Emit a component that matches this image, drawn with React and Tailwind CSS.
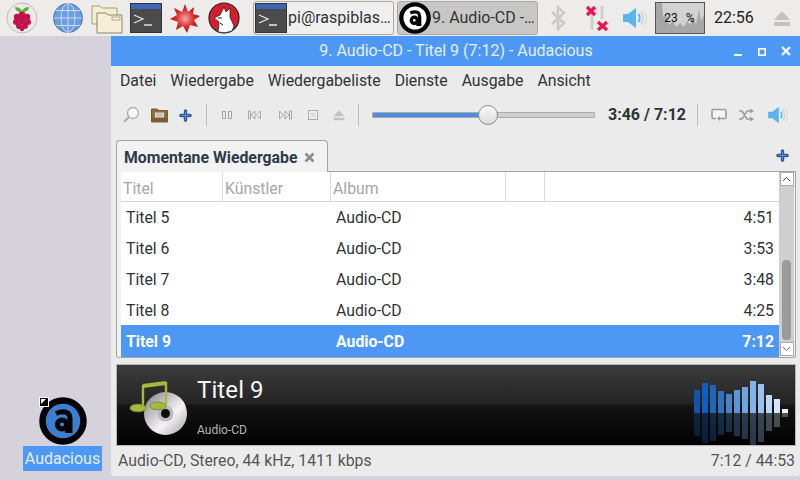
const font = { fontFamily: 'Roboto, sans-serif' };

// Equaliser bars: height above and below the baseline, colour
const bars = [
  { up: 23, color: '#0f55b0' },
  { up: 30, color: '#0f5fc0' },
  { up: 28, color: '#1f66b8' },
  { up: 22, color: '#2f72bd' },
  { up: 19, color: '#4884cc' },
  { up: 23, color: '#5a95d8' },
  { up: 26, color: '#6fa5e2' },
  { up: 32, color: '#84b3ea' },
  { up: 29, color: '#9ac2ee' },
  { up: 18, color: '#bcd8f6' },
  { up: 14, color: '#d5e6f8' },
  { up: 4, color: '#eef4fb' },
];

const rows = [
  { title: 'Titel 5', album: 'Audio-CD', time: '4:51' },
  { title: 'Titel 6', album: 'Audio-CD', time: '3:53' },
  { title: 'Titel 7', album: 'Audio-CD', time: '3:48' },
  { title: 'Titel 8', album: 'Audio-CD', time: '4:25' },
  { title: 'Titel 9', album: 'Audio-CD', time: '7:12', active: true },
];

const menus = ['Datei', 'Wiedergabe', 'Wiedergabeliste', 'Dienste', 'Ausgabe', 'Ansicht'];

const AudaciousIcon = ({ size, fill = '#fff' }) => (
  <svg width={size} height={size} viewBox="0 0 48 48" className="shrink-0">
    <circle cx="24" cy="24" r="20.5" fill={fill} stroke="#000" strokeWidth="6.5" />
    <circle cx="23" cy="27.5" r="4.6" fill="none" stroke="#000" strokeWidth="5" />
    <path d="M17 16.5 Q24 13.5 28.5 16 Q31 17.5 31 22 V33.5 H26" fill="none" stroke="#000" strokeWidth="5" />
  </svg>
);

const TerminalIcon = ({ size = 32 }) => (
  <svg width={size} height={size} viewBox="0 0 32 32" className="shrink-0">
    <rect x="0.5" y="1.5" width="31" height="29" fill="#4b4b4b" stroke="#333" />
    <rect x="1" y="2" width="30" height="5" fill="#3f66b5" />
    <path d="M4 13 L13 17 L4 21" fill="none" stroke="#e8e8e8" strokeWidth="1.2" />
    <path d="M14 23 H22" stroke="#e8e8e8" strokeWidth="1.4" />
  </svg>
);

const RaspberryIcon = () => (
  <svg width="32" height="32" viewBox="0 0 32 32" className="shrink-0">
    <circle cx="16" cy="16" r="15" fill="#eaeaea" stroke="#bdbdbd" />
    <path d="M16 10 Q9 10 9 5 Q14 5 16 9 Q18 5 23 5 Q23 10 16 10Z" fill="#5cb030" />
    <g fill="#c2124a">
      <circle cx="16" cy="13" r="3.4" />
      <circle cx="11" cy="15" r="3.2" />
      <circle cx="21" cy="15" r="3.2" />
      <circle cx="16" cy="19" r="3.4" />
      <circle cx="10" cy="20" r="3" />
      <circle cx="22" cy="20" r="3" />
      <circle cx="13" cy="24" r="3" />
      <circle cx="19" cy="24" r="3" />
      <circle cx="16" cy="27" r="2.2" />
    </g>
  </svg>
);

const GlobeIcon = () => (
  <svg width="32" height="32" viewBox="0 0 32 32" className="shrink-0">
    <circle cx="16" cy="16" r="14.5" fill="#6d9fe0" stroke="#4a6f9f" />
    <g fill="none" stroke="#d0e0f5" strokeWidth="0.9">
      <ellipse cx="16" cy="16" rx="7" ry="14.5" />
      <path d="M16 1.5 V30.5 M1.5 16 H30.5 M4 8.5 H28 M4 23.5 H28" />
    </g>
  </svg>
);

const FoldersIcon = () => (
  <svg width="32" height="32" viewBox="0 0 32 32" className="shrink-0">
    <path d="M1 4 H9 L11 6 H26 V22 H1Z" fill="#f4edd2" stroke="#a89f80" />
    <path d="M6 11 H15 L17 13 H31 V31 H6Z" fill="#f6efd6" stroke="#8d856a" />
    <rect x="21" y="15" width="8" height="3" fill="#fbf8ea" stroke="#8d856a" strokeWidth="0.7" />
  </svg>
);

const MathematicaIcon = () => (
  <svg width="32" height="32" viewBox="0 0 32 32" className="shrink-0">
    <defs>
      <radialGradient id="star">
        <stop offset="0%" stopColor="#f5a5a5" />
        <stop offset="60%" stopColor="#dc2a2a" />
        <stop offset="100%" stopColor="#b01414" />
      </radialGradient>
    </defs>
    <path d="M16 2 L19 10 L25 5 L24 12 L31 14 L25 18 L29 25 L21 23 L18 31 L14 24 L7 28 L9 20 L1 17 L8 13 L5 6 L13 10Z" fill="url(#star)" />
  </svg>
);

const WolfIcon = () => (
  <svg width="32" height="32" viewBox="0 0 32 32" className="shrink-0">
    <circle cx="16" cy="16" r="15" fill="#d81e2a" stroke="#222" strokeWidth="1.2" />
    <path d="M10 30 L11 20 L6 16 L12 13 L16 5 L18 10 L22 6 L22 15 L26 24 L24 29 Q17 32 10 30Z" fill="#fff" stroke="#222" strokeWidth="0.8" />
    <path d="M10 16 L14 16 M12 21 L15 23" stroke="#222" strokeWidth="1" />
  </svg>
);

const BluetoothIcon = () => (
  <svg width="16" height="26" viewBox="0 0 16 26" className="shrink-0">
    <path d="M2 7 L14 18 L8 24 V2 L14 8 L2 19" fill="none" stroke="#c9c9c9" strokeWidth="2.4" />
  </svg>
);

const NetworkIcon = () => (
  <svg width="22" height="26" viewBox="0 0 22 26" className="shrink-0">
    <path d="M6 6 V25 M16 1 V14" stroke="#cfcfcf" strokeWidth="3" />
    <path d="M1 2 L9 10 M9 2 L1 10" stroke="#f0124f" strokeWidth="3.2" />
    <path d="M12 17 L21 25 M21 17 L12 25" stroke="#f0124f" strokeWidth="3.2" />
  </svg>
);

const VolumeIcon = ({ width = 26, height = 22 }) => (
  <svg width={width} height={height} viewBox="0 0 26 22" className="shrink-0">
    <path d="M1 7 H6 L14 1 V21 L6 15 H1Z" fill="#5ab4f2" />
    <path d="M16.5 7 Q19 11 16.5 15" fill="none" stroke="#5ab4f2" strokeWidth="1.8" />
    <path d="M19 4.5 Q23 11 19 17.5" fill="none" stroke="#d2d2d2" strokeWidth="1.6" />
    <path d="M22 2.5 Q27 11 22 19.5" fill="none" stroke="#dcdcdc" strokeWidth="1.4" />
  </svg>
);

const EjectIcon = ({ size = 18, color = '#c2c2c2' }) => (
  <svg width={size} height={size} viewBox="0 0 18 18" className="shrink-0">
    <path d="M9 2 L17 11 H1Z M1 13 H17 V17 H1Z" fill={color} />
  </svg>
);

const PlusIcon = () => (
  <svg width="13" height="13" viewBox="0 0 14 14" className="shrink-0">
    <path d="M7 2 V12 M2 7 H12" stroke="#2e5a9c" strokeWidth="3.6" strokeLinecap="round" />
    <path d="M7 3 V11 M3 7 H11" stroke="#5c8cd0" strokeWidth="1.2" strokeLinecap="round" />
  </svg>
);

const SearchIcon = () => (
  <svg width="18" height="18" viewBox="0 0 18 18" className="shrink-0">
    <circle cx="11" cy="7" r="5.5" fill="#f7f7f7" stroke="#aaa" strokeWidth="1.3" />
    <path d="M7 11 L2 16" stroke="#aaa" strokeWidth="2" />
  </svg>
);

const OpenIcon = () => (
  <svg width="17" height="16" viewBox="0 0 17 16" className="shrink-0">
    <path d="M0.5 2 H6 L8 3.5 H16.5 V15 H0.5Z" fill="#8c6d3e" stroke="#5d4826" strokeWidth="0.8" />
    <rect x="4" y="5.5" width="9" height="5" fill="#e8e6e0" />
    <path d="M5 7 H12 M5 9 H12" stroke="#8a8a8a" strokeWidth="0.7" />
    <rect x="0.5" y="11" width="16" height="4" fill="#7a5d33" />
  </svg>
);

const PauseIcon = () => (
  <svg width="12" height="12" viewBox="0 0 12 12" className="shrink-0">
    <path d="M1.5 2.5 H4.5 V9.5 H1.5Z M7.5 2.5 H10.5 V9.5 H7.5Z" fill="#ededed" stroke="#a0a0a0" />
  </svg>
);

const PrevIcon = () => (
  <svg width="16" height="12" viewBox="0 0 16 12" className="shrink-0">
    <path d="M1.5 2 H3.5 V10 H1.5Z M8 2 L4 6 L8 10Z M13.5 2 L9.5 6 L13.5 10Z" fill="#ededed" stroke="#a0a0a0" strokeWidth="0.9" />
  </svg>
);

const NextIcon = () => (
  <svg width="16" height="12" viewBox="0 0 16 12" className="shrink-0">
    <path d="M14.5 2 H12.5 V10 H14.5Z M8 2 L12 6 L8 10Z M2.5 2 L6.5 6 L2.5 10Z" fill="#ededed" stroke="#a0a0a0" strokeWidth="0.9" />
  </svg>
);

const StopIcon = () => (
  <svg width="12" height="12" viewBox="0 0 12 12" className="shrink-0">
    <rect x="1.5" y="1.5" width="9" height="9" fill="#f2f2f2" stroke="#a8a8a8" />
    <rect x="3.5" y="3.5" width="5" height="5" fill="#dcdcdc" />
  </svg>
);

const RepeatIcon = () => (
  <svg width="16" height="14" viewBox="0 0 16 14" className="shrink-0">
    <path d="M5 10.5 H2 Q1 10.5 1 9 V3 Q1 1.5 2 1.5 H14 Q15 1.5 15 3 V9 Q15 10.5 14 10.5 H8" fill="#f4f4f4" stroke="#9c9c9c" strokeWidth="1.6" />
    <path d="M9 8 L6 10.5 L9 13Z" fill="#9c9c9c" />
  </svg>
);

const ShuffleIcon = () => (
  <svg width="16" height="14" viewBox="0 0 16 14" className="shrink-0">
    <path d="M1 3 H4 L9 11 H13 M1 11 H4 L9 3 H13" fill="none" stroke="#9c9c9c" strokeWidth="1.6" />
    <path d="M12 0.5 L16 3 L12 5.5Z M12 8.5 L16 11 L12 13.5Z" fill="#9c9c9c" />
  </svg>
);

const CdIcon = () => (
  <svg width="60" height="60" viewBox="0 0 60 60" className="shrink-0">
    <defs>
      <linearGradient id="disc" x1="0" y1="0" x2="1" y2="1">
        <stop offset="0%" stopColor="#7c7c7c" />
        <stop offset="45%" stopColor="#d8d6dc" />
        <stop offset="60%" stopColor="#f4f2f6" />
        <stop offset="100%" stopColor="#a0a0a0" />
      </linearGradient>
    </defs>
    <circle cx="36.5" cy="35.5" r="21.5" fill="url(#disc)" />
    <circle cx="36.5" cy="35.5" r="8" fill="#b9b9bd" />
    <circle cx="36.5" cy="35.5" r="4.5" fill="#0c0c0c" />
    <path d="M14 30 V8 L37 5 V27" fill="none" stroke="#a8b83c" strokeWidth="2.4" />
    <path d="M14 8 L37 5" stroke="#a8b83c" strokeWidth="4" />
    <ellipse cx="9" cy="30" rx="8" ry="3.8" fill="#a8b83c" stroke="#7d922a" />
    <ellipse cx="29" cy="28" rx="8" ry="3.8" fill="#a8b83c" stroke="#7d922a" />
  </svg>
);

const TaskButton = ({ active, icon, label }) => (
  <div
    className={`flex h-[34px] w-[141px] shrink-0 items-center gap-[1px] overflow-hidden rounded-[3px] border border-[#a9a9a9] pl-[1px] text-[16px] text-[#2e3436] ${
      active ? 'bg-[#c9c7c5]' : 'bg-[#f0efee]'
    }`}
  >
    {icon}
    <span className="whitespace-nowrap">{label}</span>
  </div>
);

const CpuMonitor = () => (
  <div className="relative ml-[7px] h-[32px] w-[50px] shrink-0 border border-[#555] bg-[#d2d2d2] text-[12px] text-[#111]">
    <svg width="48" height="30" viewBox="0 0 48 30" className="block">
      <path
        d="M0 0 H6 L7 14 L10 10 L13 22 L17 18 L20 24 L24 20 L28 24 L31 18 L34 22 L37 14 L40 22 L43 6 L45 18 L48 12 V30 H0Z"
        fill="#a6a6a6"
      />
    </svg>
    <div className="absolute inset-0 flex items-center justify-center gap-[8px] pr-[1px]">
      <span>23</span>
      <span>%</span>
    </div>
  </div>
);

const Taskbar = () => (
  <div className="flex h-[36px] shrink-0 items-center bg-[#edecea] pl-[6px]">
    <div className="flex items-center gap-[7px]">
      <div className="mr-[7px]">
        <RaspberryIcon />
      </div>
      <GlobeIcon />
      <FoldersIcon />
      <TerminalIcon />
      <MathematicaIcon />
      <WolfIcon />
    </div>
    <div className="ml-[13px] flex items-center gap-[3px]">
      <TaskButton icon={<TerminalIcon />} label="pi@raspiblas…" />
      <TaskButton active icon={<AudaciousIcon size={32} />} label="9. Audio-CD -…" />
    </div>
    <div className="ml-[12px] flex items-center">
      <BluetoothIcon />
      <div className="ml-[20px]">
        <NetworkIcon />
      </div>
      <div className="ml-[14px]">
        <VolumeIcon />
      </div>
    </div>
    <CpuMonitor />
    <span className="ml-[9px] w-[40px] text-[16px] whitespace-nowrap text-[#222]">22:56</span>
    <div className="ml-[19px]">
      <EjectIcon />
    </div>
  </div>
);

const TitleBar = () => (
  <div className="flex h-[30px] shrink-0 items-center bg-[#4d98f5] pr-[8px] pl-[73px] text-[#e4effc]">
    <div className="flex-1 text-center text-[16px]">9. Audio-CD - Titel 9 (7:12) - Audacious</div>
    <svg width="64" height="12" viewBox="0 0 64 12" className="shrink-0">
      <path d="M6 10 H14" stroke="#fff" strokeWidth="2" />
      <rect x="30.8" y="3.8" width="6.4" height="6.4" fill="none" stroke="#fff" strokeWidth="1.6" />
      <path d="M54 2 L62 10 M62 2 L54 10" stroke="#fff" strokeWidth="2.2" />
    </svg>
  </div>
);

const MenuBar = () => (
  <div className="flex h-[30px] shrink-0 items-center gap-[14px] pl-[9px] text-[15.8px] text-[#333]">
    {menus.map((item) => (
      <span key={item}>{item}</span>
    ))}
  </div>
);

const Toolbar = () => (
  <div className="flex h-[38px] shrink-0 items-center pl-[11px] text-[#2e3436]">
    <SearchIcon />
    <div className="ml-[11px]">
      <OpenIcon />
    </div>
    <div className="ml-[11px]">
      <PlusIcon />
    </div>
    <div className="ml-[14px] h-[22px] w-px bg-[#bdbdbd]" />
    <div className="ml-[14px] flex items-center gap-[14px]">
      <PauseIcon />
      <PrevIcon />
      <NextIcon />
      <StopIcon />
      <EjectIcon size={12} />
    </div>
    <div className="ml-[13px] h-[22px] w-px bg-[#bdbdbd]" />
    <div className="relative ml-[13px] flex h-[6px] w-[223px] overflow-visible rounded-[1px] border border-[#aaa] bg-[#cfcfcf]">
      <div className="w-[116px] rounded-l-[1px] bg-[#4a8fe0]" />
      <div className="absolute top-[-8px] left-[105px] h-[20px] w-[20px] rounded-full border border-[#8c8c8c] bg-gradient-to-b from-[#fafafa] to-[#dcdcdc]" />
    </div>
    <span className="ml-[13px] text-[16px] font-bold whitespace-nowrap">3:46 / 7:12</span>
    <div className="ml-[11px] h-[22px] w-px bg-[#bdbdbd]" />
    <div className="ml-[13px] flex items-center gap-[11px]">
      <RepeatIcon />
      <ShuffleIcon />
      <div className="ml-[2px]">
        <VolumeIcon width={22} height={18} />
      </div>
    </div>
  </div>
);

const TabBar = () => (
  <div className="mt-[6px] flex h-[32px] shrink-0 items-end pr-[4px] pl-[5px]">
    <div className="flex h-[32px] w-[212px] items-center gap-[7px] rounded-t-[4px] border border-b-0 border-[#a5a5a5] bg-[#f2f2f2] pt-[2px] pl-[7px] text-[15.8px] font-bold text-[#2e3a4a]">
      <span className="whitespace-nowrap">Momentane Wiedergabe</span>
      <svg width="11" height="11" viewBox="0 0 11 11" className="shrink-0">
        <path d="M1.5 1.5 L9.5 9.5 M9.5 1.5 L1.5 9.5" stroke="#8c8c8c" strokeWidth="2.6" />
      </svg>
    </div>
    <div className="flex h-[32px] flex-1 items-center justify-end border-b border-[#a5a5a5] pr-[7px]">
      <PlusIcon />
    </div>
  </div>
);

const Playlist = () => (
  <div className="mr-[4px] ml-[5px] flex h-[186px] shrink-0 overflow-hidden rounded-b-[3px] border border-t-0 border-[#a5a5a5] bg-[#f2f2f2] pr-[1px] pb-[1px] pl-[4px]">
    <div className="flex min-w-0 flex-1 flex-col bg-white text-[15.8px] text-[#2e3436]">
      <div className="flex h-[30px] shrink-0 items-center border-b border-[#d5d5d5] text-[#a6a6a6]">
        <span className="flex h-full w-[102px] items-center border-r border-[#dcdcdc] pt-[4px] pl-[2px]">Titel</span>
        <span className="flex h-full w-[108px] items-center border-r border-[#dcdcdc] pt-[4px] pl-[2px]">Künstler</span>
        <span className="flex h-full w-[175px] items-center border-r border-[#dcdcdc] pt-[4px] pl-[2px]">Album</span>
        <span className="h-full w-[39px] border-r border-[#dcdcdc]" />
      </div>
      {rows.map((row) => (
        <div
          key={row.title}
          className={`flex shrink-0 items-center pr-[5px] pl-[5px] ${
            row.active ? '-mt-px h-[32px] bg-[#4d98f5] pt-px font-bold text-white' : 'h-[31px]'
          }`}
        >
          <span className="w-[210px]">{row.title}</span>
          <span className="flex-1">{row.album}</span>
          <span>{row.time}</span>
        </div>
      ))}
    </div>
    <div className="flex w-[15px] shrink-0 flex-col items-center bg-[#cfcfcf]">
      <div className="flex h-[14px] w-[14px] items-center justify-center border border-[#aaa] bg-white">
        <svg width="9" height="6" viewBox="0 0 9 6">
          <path d="M1 5 L4.5 1.5 L8 5" fill="none" stroke="#555" />
        </svg>
      </div>
      <div className="mt-[74px] h-[81px] w-[9px] rounded-[4px] bg-[#9b9b9b]" />
      <div className="mt-[2px] flex h-[14px] w-[14px] items-center justify-center border border-[#aaa] bg-white">
        <svg width="9" height="6" viewBox="0 0 9 6">
          <path d="M1 1 L4.5 4.5 L8 1" fill="none" stroke="#777" />
        </svg>
      </div>
    </div>
  </div>
);

const InfoArea = () => (
  <div className="mt-[6px] mr-[4px] ml-[5px] flex h-[82px] shrink-0 items-stretch border border-[#b5b5b5] bg-[linear-gradient(#3c3c3c,#232323_49%,#141414_50%,#000)] text-white">
    <div className="mt-[13px] ml-[12px]">
      <CdIcon />
    </div>
    <div className="ml-[8px] flex flex-1 flex-col">
      <span className="mt-[9px] text-[24px] leading-[32px] tracking-[0.1px] text-[#f4f4f4]">Titel 9</span>
      <span className="mt-[17px] text-[12px] leading-[14px] text-[#b5b5b5]">Audio-CD</span>
    </div>
    <div className="mr-[7px] flex items-start gap-[2px] pt-[16px]">
      {bars.map((bar, i) => (
        <div key={i} className="flex h-[64px] w-[6px] flex-col">
          <div className="flex h-[32px] flex-col justify-end">
            <div style={{ height: bar.up, backgroundColor: bar.color }} />
          </div>
          <div style={{ height: bar.up, backgroundColor: bar.color }} className="opacity-30" />
        </div>
      ))}
    </div>
  </div>
);

const StatusBar = () => (
  <div className="flex h-[30px] shrink-0 items-center justify-between pr-[5px] pl-[7px] text-[15.8px] text-[#555]">
    <span>Audio-CD, Stereo, 44 kHz, 1411 kbps</span>
    <span>7:12 / 44:53</span>
  </div>
);

const DesktopIcon = () => (
  <div className="flex w-[111px] shrink-0 flex-col items-center justify-end pb-[9px] pl-[14px]">
    <div className="relative flex h-[48px] w-[48px] items-center justify-center">
      <AudaciousIcon size={48} fill="#3b7fd0" />
      <div className="absolute top-0 left-0 flex h-[10px] w-[10px] items-center justify-center border border-white bg-black">
        <svg width="6" height="6" viewBox="0 0 6 6">
          <path d="M0 0 H5 L0 5Z" fill="#fff" />
        </svg>
      </div>
    </div>
    <span className="mt-[1px] flex h-[25px] w-[79px] items-center justify-center bg-[#4d98f5] pt-[1px] text-[16px] text-[#e4effc]">
      Audacious
    </span>
  </div>
);

const App = () => {
  return (
    <div style={font} className="flex h-[480px] w-[800px] flex-col overflow-hidden bg-[#d6d2dc]">
      <Taskbar />
      <div className="flex min-h-0 flex-1">
        <DesktopIcon />
        <div className="mb-[4px] flex min-w-0 flex-1 flex-col rounded-b-[3px] bg-[#ebebeb]">
          <TitleBar />
          <MenuBar />
          <Toolbar />
          <TabBar />
          <Playlist />
          <InfoArea />
          <StatusBar />
        </div>
      </div>
    </div>
  );
};

export default App;
